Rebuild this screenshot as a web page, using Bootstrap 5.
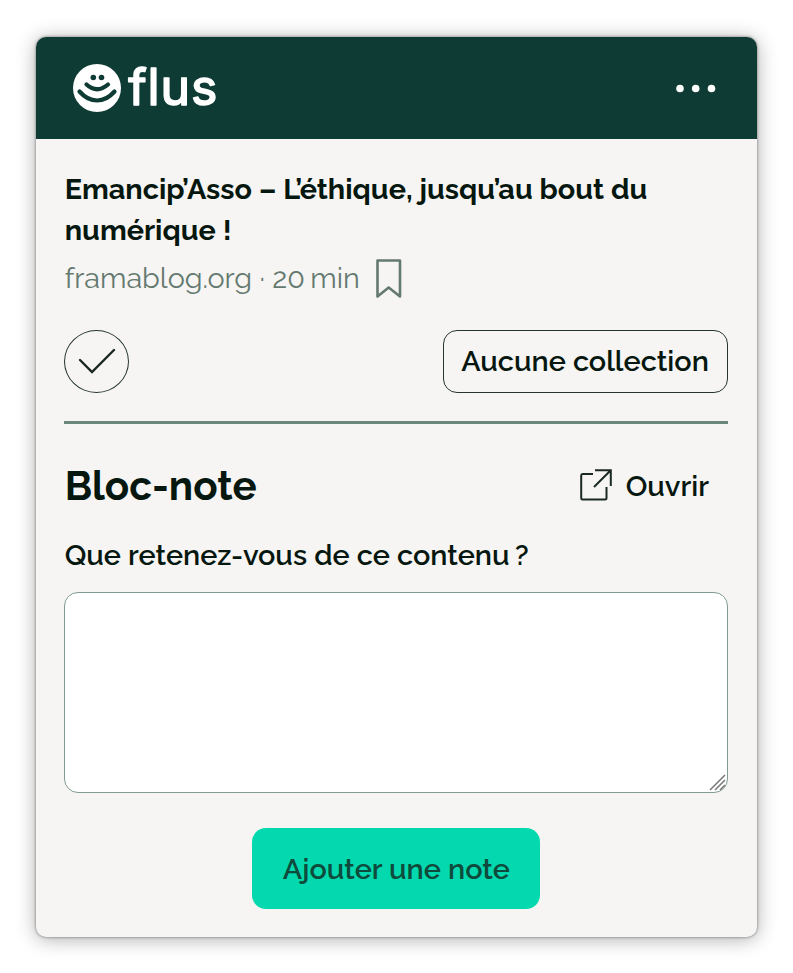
<!DOCTYPE html>
<html lang="fr">
<head>
<meta charset="utf-8">
<meta name="viewport" content="width=device-width, initial-scale=1">
<title>flus</title>
<link href="https://cdn.jsdelivr.net/npm/bootstrap@5.3.0/dist/css/bootstrap.min.css" rel="stylesheet">
<style>
body{background:#fff;color:#06170f;font-family:Raleway,Lato,"Open Sans",sans-serif;font-size:28.8px;line-height:40.5px;font-weight:600;padding:37px 36px 36px;min-height:973px}
.popup{width:721px;height:900px;border-radius:10px;background:#f6f5f3;box-shadow:0 0 3px rgba(0,0,0,.5),0 2px 20px rgba(0,0,0,.32)}
.topbar{height:102px;background:#0e3b34;padding:0 30px 0 37px;border-radius:10px 10px 0 0}
.wordmark{font-family:Inter,sans-serif;font-size:50px;font-weight:400;fill:#fff;stroke:#fff;stroke-width:1.6px;stroke-linejoin:round;font-variant-ligatures:none}
.content{padding:30px 29px 0 28px}
.content svg,.topbar svg{display:block;flex:none}
.fit{white-space:nowrap;padding-left:.7px}
.title{font-size:28.8px;line-height:40.5px;font-weight:700}
.meta{color:#64796f;font-weight:400;height:44px;margin-top:6px;font-variant-numeric:oldstyle-nums}
.bookmark{margin-left:15.5px;margin-top:2px}
.thin{letter-spacing:1.7px}
.actions{height:63px;margin-top:30px}
.round{width:65px;height:63px;border:1.5px solid #26352e;border-radius:50%;background:none}
.tick{margin:0 2px 1px 0}
.collection{width:285px;height:63px;border:1.5px solid #26352e;border-radius:14px;font-size:28.8px;font-weight:600;color:#06170f}
.collection .fit{padding:0 1px 0 0}
.rule{height:3px;background:#6a877d;margin-top:28px}
.heading{font-size:40.3px;line-height:50px;font-weight:700}
.section-head{margin-top:37px}
.open-link{padding-right:19px}
.open-icon{margin:0 1.5px 2px 0}
.question{margin-top:24px}
.note{height:201px;border:1.5px solid #809b90;border-radius:14px;resize:none;background:#fff}
.add{width:288px;height:81px;border-radius:14px;background:#03d8ae;color:#0e4b3c;font-size:28.8px;font-weight:600;padding:4px 0 0}
.add:hover{background:#03d8ae}
.add-row{margin-top:35px}
.grip{position:absolute;right:1px;bottom:1px}
</style>
</head>
<body>
<main class="popup">
<header class="topbar d-flex align-items-center justify-content-between">
<a href="#" class="d-flex align-items-center text-decoration-none">
<svg width="48" height="48" viewBox="0 0 48 48"><circle cx="24" cy="24" r="24" fill="#fff"/><g fill="none" stroke="#0e3b34" stroke-width="4.2" stroke-linecap="round"><path d="M13.5 20.5Q24 30 35 20.5M6.5 27.5C17 39.5 31 39.5 41.5 27.5"/></g><g fill="#0e3b34"><circle cx="20.3" cy="13.5" r="2.8"/><circle cx="28.5" cy="13.5" r="2.8"/></g></svg>
<svg width="110" height="80" viewBox="0 0 110 80"><text class="wordmark" x="7.3" y="57" textLength="89">flus</text></svg></a>
<svg width="54" height="12" viewBox="0 0 54 12" fill="#fff"><circle cx="7" cy="6.5" r="3.8"/><circle cx="22.7" cy="6.5" r="3.8"/><circle cx="38.5" cy="6.5" r="3.8"/></svg>
</header>
<div class="content d-flex flex-column">
<h1 class="title mb-0"><span class="fit">Emancip’Asso – L’éthique, jusqu’au bout du</span><br><span class="fit">numérique !</span></h1>
<div class="meta d-flex align-items-center"><span class="fit">framablog.org · 20<span class="thin">&#8239;</span>min</span>
<svg class="bookmark" width="28" height="42" viewBox="0 0 28 42"><path d="M2.5 2.5H25V38.5L13.7 29.5L2.5 38.5Z" fill="none" stroke="#64796f" stroke-width="2.6" stroke-linejoin="round"/></svg></div>
<div class="actions d-flex justify-content-between">
<button class="round p-0 d-flex align-items-center justify-content-center" aria-label="Marquer comme lu"><svg class="tick" width="40" height="30" viewBox="0 0 40 30"><path d="M4 14L16 26L38 4" fill="none" stroke="#1b2923" stroke-width="2.4" stroke-linecap="round"/></svg></button>
<button class="collection btn p-0"><span class="fit">Aucune collection</span></button>
</div>
<div class="rule"></div>
<div class="section-head d-flex justify-content-between align-items-center"><h2 class="heading mb-0"><span class="fit">Bloc-note</span></h2>
<a href="#" class="open-link d-flex align-items-center text-reset text-decoration-none"><svg class="open-icon" width="32" height="32" viewBox="0 0 32 32" fill="none" stroke="#1b2923" stroke-width="2"><path d="M13 5H2.5Q1.2 5 1.2 6.5V29Q1.2 30.5 2.5 30.5H25Q26.5 30.5 26.5 29V18M15 1.2H30.8V17M30 2L14 18"/></svg><span class="fit ps-1 ms-2">Ouvrir</span></a></div>
<label for="note" class="question"><span class="fit">Que retenez-vous de ce contenu<span class="thin">&#8239;</span>?</span></label>
<div class="position-relative d-flex mt-3"><textarea id="note" class="note form-control"></textarea>
<svg class="grip" width="18" height="18" viewBox="0 0 18 18" stroke="#777" stroke-width="1.5"><path d="M1 16L16 1M6 16L16 6M11 16L16 11"/></svg></div>
<div class="add-row text-center"><button class="add btn border-0"><span class="fit">Ajouter une note</span></button></div>
</div>
</main>
<script src="https://cdn.jsdelivr.net/npm/bootstrap@5.3.0/dist/js/bootstrap.bundle.min.js"></script>
</body>
</html>
